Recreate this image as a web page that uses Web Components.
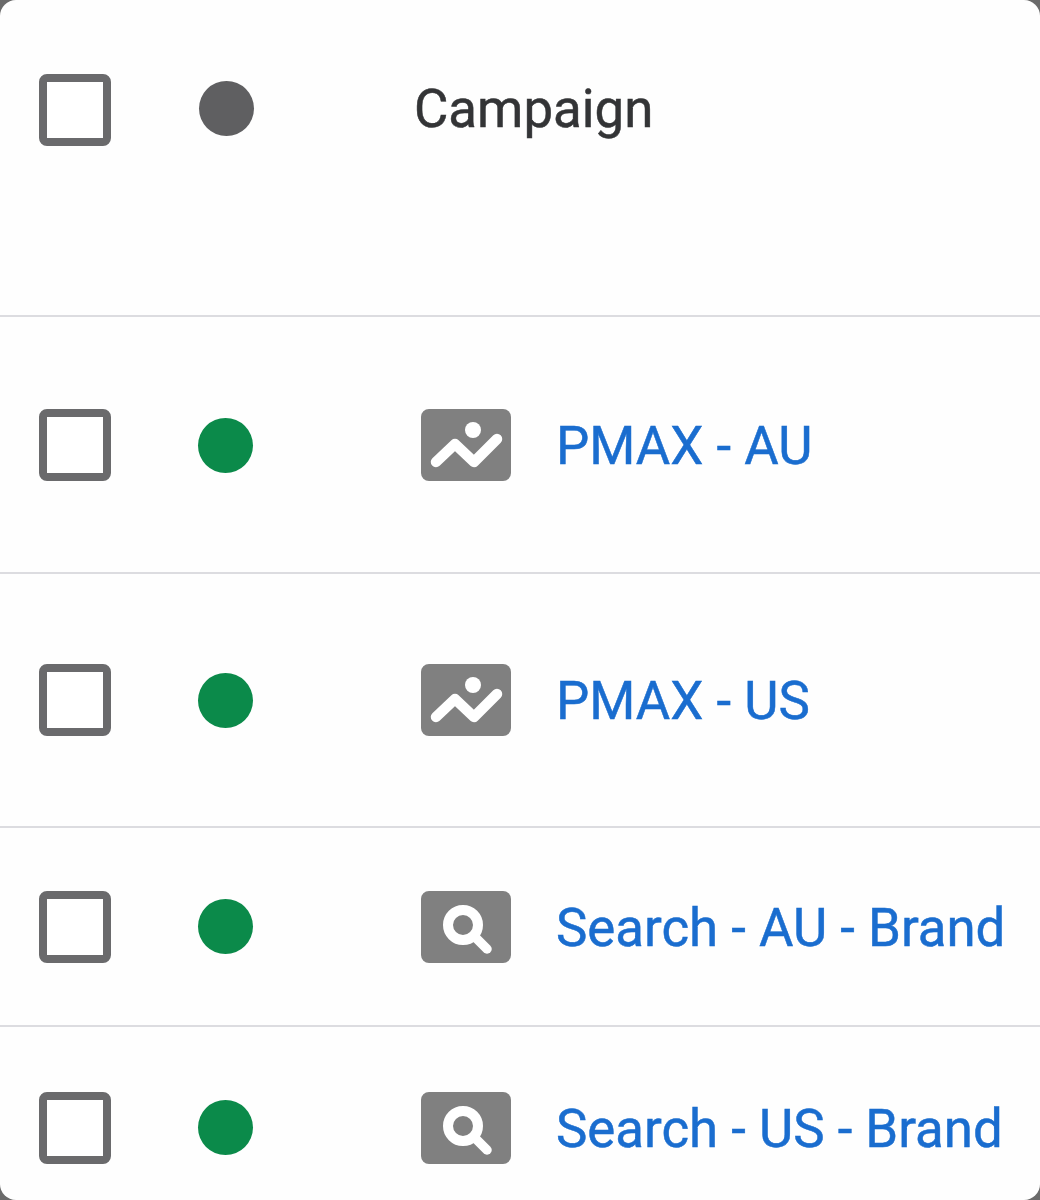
<!DOCTYPE html>
<html><head><meta charset="utf-8"><style>
html,body{margin:0;padding:0;background:#6a6a6a}
body{width:1040px;height:1200px;overflow:hidden}
</style></head><body>
<x-card>
<x-row head style="--h:315px;--pt:74px;--pl:39px">
<x-check></x-check><x-dot color="#5f5f61" style="--dy:-2px"></x-dot>
<span slot="label">Campaign</span>
</x-row>
<x-row style="--h:255px"><x-check></x-check><x-dot style="--dy:1px"></x-dot><x-type kind="pmax"></x-type><x-link>PMAX - AU</x-link></x-row>
<x-row style="--h:252px"><x-check></x-check><x-dot></x-dot><x-type kind="pmax"></x-type><x-link>PMAX - US</x-link></x-row>
<x-row style="--h:197px"><x-check></x-check><x-dot></x-dot><x-type kind="search"></x-type><x-link>Search - AU - Brand</x-link></x-row>
<x-row last style="--h:173px;--pt:64px"><x-check></x-check><x-dot style="--dy:-1px"></x-dot><x-type kind="search"></x-type><x-link>Search - US - Brand</x-link></x-row>
</x-card>
<script>
function def(name,html){customElements.define(name,class extends HTMLElement{constructor(){super();this.attachShadow({mode:'open'}).innerHTML=typeof html==='function'?html(this):html;}})}
def('x-card',`<style>:host{display:flex;flex-direction:column;width:1040px;height:1200px;background:#fefefe;border-radius:16px;overflow:hidden;font-family:Roboto,sans-serif}</style><slot></slot>`);
def('x-row',`<style>:host{display:flex;height:var(--h);align-items:center;padding-left:var(--pl,39px);border-bottom:2px solid #dcdce0;overflow:hidden}
:host([last]){border-bottom:0}
:host([head]),:host([last]){box-sizing:border-box;align-items:flex-start;padding-top:var(--pt)}
:host([head]){height:calc(var(--h) + 2px)}
.g{display:flex;align-items:center;gap:87px}
:host([head]) .g{gap:88px}
.l{font:400 52.8px/72px Roboto,sans-serif;-webkit-text-stroke:.5px #333436;color:#333436;margin-left:160px;margin-top:-1px;white-space:nowrap}
:host(:not([head])) .l{display:none}
</style><div class="g"><slot></slot></div><div class="l"><slot name="label"></slot></div>`);
def('x-check',`<style>:host{display:block;width:72px;height:72px;box-sizing:border-box;border:8px solid #6a6a6c;border-radius:8px;background:#fff;flex:none}</style>`);
def('x-dot',h=>`<style>:host{display:block;width:55px;height:55px;border-radius:50%;background:${h.getAttribute('color')||'#0b8a4a'};flex:none;margin-top:calc(var(--dy,0px)*2)}</style>`);
def('x-type',h=>{
const pmax=`<circle cx="52" cy="21" r="8" fill="#fff"/><path d="M15 53 L34 35 L53 53 L76 30" fill="none" stroke="#fff" stroke-width="10.5" stroke-linecap="round" stroke-linejoin="round"/>`;
const search=`<circle cx="42" cy="34" r="15" fill="none" stroke="#fff" stroke-width="10"/><path d="M54 46 L66 58" stroke="#fff" stroke-width="9.5" stroke-linecap="round"/>`;
return `<style>:host{display:block;width:90px;height:72px;margin-left:81px;flex:none}svg{display:block}</style><svg width="90" height="72" viewBox="0 0 90 72"><rect width="90" height="72" rx="8" fill="#808080"/>${h.getAttribute('kind')==='pmax'?pmax:search}</svg>`});
def('x-link',`<style>:host{display:block;font:400 52.8px/72px Roboto,sans-serif;-webkit-text-stroke:.5px #1a6dcf;color:#1a6dcf;white-space:nowrap;margin-left:-42px;margin-top:2px}</style><slot></slot>`);
</script>
</body></html>
